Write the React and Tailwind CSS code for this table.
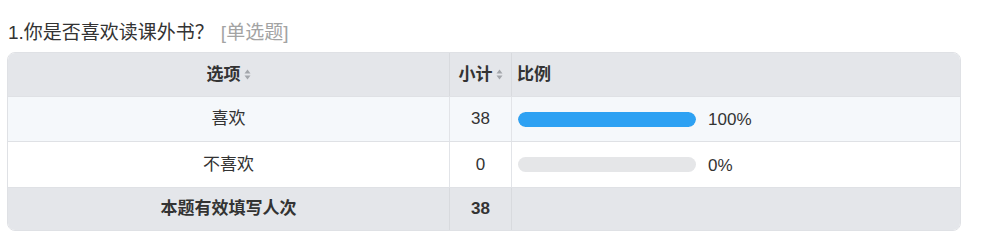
import React from "react";

const rows = [
  { label: "喜欢", count: 38, pct: 100 },
  { label: "不喜欢", count: 0, pct: 0 },
];

const SortIcon = () => (
  <svg width="7" height="11" viewBox="0 0 7 11" className="ml-[3px] inline-block">
    <path d="M3.5 0.5 L6.5 4.5 L0.5 4.5 Z" fill="#a3a6ab" />
    <path d="M3.5 10.5 L6.5 6.5 L0.5 6.5 Z" fill="#a3a6ab" />
  </svg>
);

export default function App() {
  return (
    <div
      className="w-[1000px] h-[249px] bg-white text-[#333]"
      style={{ fontFamily: '"Liberation Sans", "Noto Sans CJK SC", sans-serif' }}
    >
      <div className="pt-[20px] pl-[8px] h-[52px] text-[19px] leading-[26px] flex items-start">
        <span>1.你是否喜欢读课外书？</span>
        <span className="ml-[7px] text-[#a3a3a3]">[单选题]</span>
      </div>

      <div className="ml-[7px] w-[954px] rounded-lg border border-[#dfe1e5] overflow-hidden text-[17px]">
        {/* header */}
        <div className="grid grid-cols-[441px_62px_1fr] h-[44px] bg-[#e4e6ea] border-b border-[#dfe1e5] font-bold">
          <div className="flex items-center justify-center">
            选项
            <SortIcon />
          </div>
          <div className="flex items-center justify-center border-l border-[#d8dade]">
            小计
            <SortIcon />
          </div>
          <div className="flex items-center pl-[5px] border-l border-[#d8dade]">比例</div>
        </div>

        {rows.map((r, i) => (
          <div
            key={r.label}
            className={`grid grid-cols-[441px_62px_1fr] border-b border-[#dfe1e5] ${
              i === 0 ? "h-[45px] bg-[#f5f8fb]" : "h-[46px] bg-white"
            }`}
          >
            <div className="flex items-center justify-center">{r.label}</div>
            <div className="flex items-center justify-center border-l border-[#e2e4e8]">
              {r.count}
            </div>
            <div className="flex items-center pl-[6px] border-l border-[#e2e4e8]">
              <div className="w-[178px] h-[15px] rounded-full bg-[#e5e6e8] overflow-hidden">
                <div className="h-full rounded-full bg-[#2da1f3]" style={{ width: `${r.pct}%` }} />
              </div>
              <span className="ml-[12px] mt-[2px]">{r.pct}%</span>
            </div>
          </div>
        ))}

        {/* footer */}
        <div className="grid grid-cols-[441px_62px_1fr] h-[42px] bg-[#e4e6ea] font-bold">
          <div className="flex items-center justify-center">本题有效填写人次</div>
          <div className="flex items-center justify-center border-l border-[#d8dade]">38</div>
          <div className="border-l border-[#d8dade]" />
        </div>
      </div>
    </div>
  );
}
